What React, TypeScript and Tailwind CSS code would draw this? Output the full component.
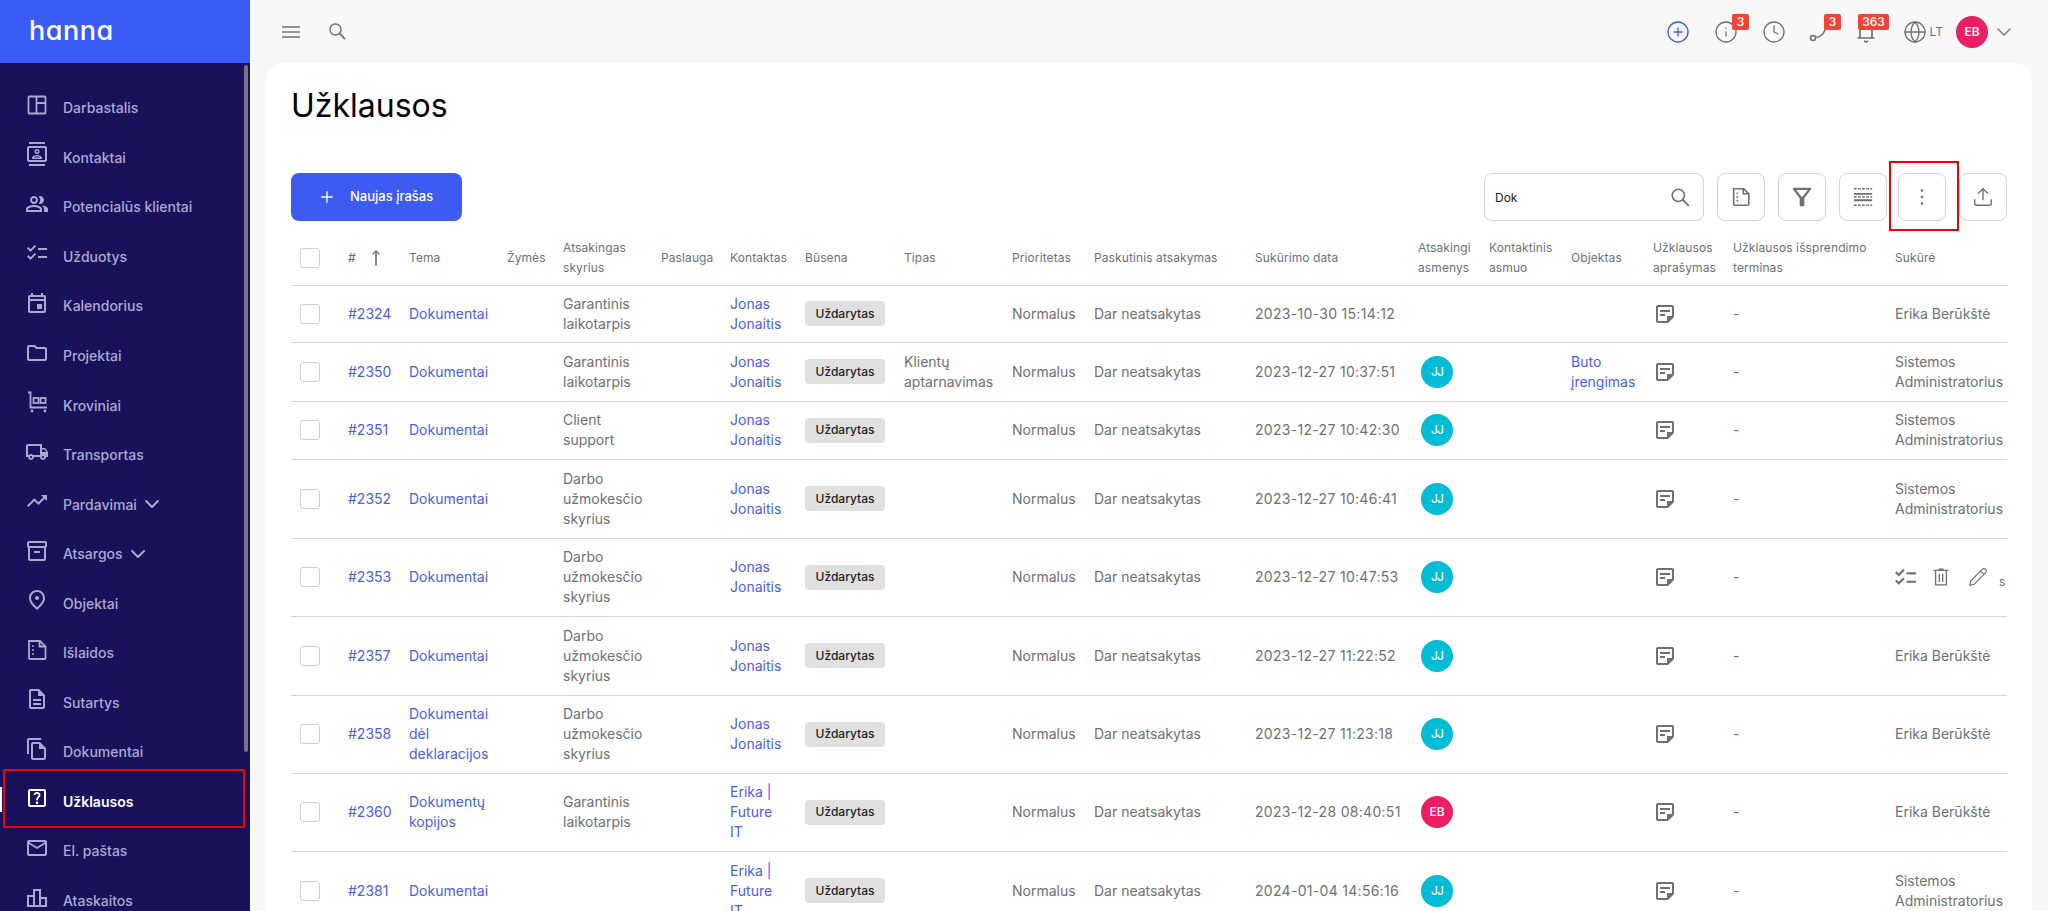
import React from 'react';
import { ChevronDown, CirclePlus, Clock, Globe, Info, Pencil, Plus, Upload } from 'lucide-react';
import {
    MdOutlineChecklist,
    MdOutlineContacts,
    MdOutlineDescription,
    MdOutlineEvent,
    MdOutlineFileCopy,
    MdOutlineFilterAlt,
    MdOutlineFolder,
    MdOutlineHelpCenter,
    MdOutlineInventory2,
    MdOutlineLeaderboard,
    MdOutlineLocalShipping,
    MdOutlineMail,
    MdOutlinePeopleAlt,
    MdOutlinePlace,
    MdOutlineStickyNote2,
    MdOutlineTrendingUp,
} from 'react-icons/md';

const DashboardIcon = ({ className }: { className?: string }) => (
    <svg viewBox="0 0 24 24" fill="none" stroke="currentColor" strokeWidth="1.8" className={className}>
        <rect x="3.5" y="3.5" width="17" height="17" rx="1" />
        <path d="M11.5 3.5v17M11.5 10h9" />
    </svg>
);

const TrolleyIcon = ({ className }: { className?: string }) => (
    <svg viewBox="0 0 24 24" fill="none" stroke="currentColor" strokeWidth="1.8" className={className}>
        <path d="M3 2.5h2.5v15H22" />
        <rect x="8.5" y="8" width="5" height="5" />
        <rect x="15.5" y="8" width="5" height="5" />
        <circle cx="7" cy="21" r="1.4" fill="currentColor" stroke="none" />
        <circle cx="20" cy="21" r="1.4" fill="currentColor" stroke="none" />
    </svg>
);

const DocDotsIcon = ({ className }: { className?: string }) => (
    <svg viewBox="0 0 24 24" fill="none" stroke="currentColor" strokeWidth="1.8" className={className}>
        <path d="M4 3h11l5.500 5.500V20a1 1 0 0 1-1 1H5a1 1 0 0 1-1-1Z" />
        <path d="M14.500 3v5.500H20.500" />
        <path d="M8 8v.01M8 12v.01M8 16v.01" strokeWidth="2" strokeLinecap="round" />
    </svg>
);

const DenseIcon = ({ className }: { className?: string }) => (
    <svg viewBox="0 0 24 24" fill="none" stroke="currentColor" className={className}>
        <path d="M2 3h20M2 21h20" strokeWidth="1.500" strokeDasharray="3 1.500" />
        <path d="M2 8.500h20M2 15.500h20" strokeWidth="2" />
        <path d="M2 12h20" strokeWidth="1.500" strokeDasharray="3 1.500" />
    </svg>
);

const PhoneCurve = ({ className }: { className?: string }) => (
    <svg viewBox="0 0 24 24" fill="none" stroke="currentColor" strokeWidth="1.600" className={className}>
        <circle cx="5" cy="18" r="2.500" />
        <path d="M7.500 17.500C13 17 17 13 18 6" />
    </svg>
);

const BellBase = ({ className }: { className?: string }) => (
    <svg viewBox="0 0 24 24" fill="none" stroke="currentColor" strokeWidth="1.700" className={className}>
        <path d="M6 4v14M18 4v14M3.500 18h17" />
        <path d="M10.500 20.500a1.500 1.500 0 0 0 3 0" />
    </svg>
);

const TrashIcon = ({ className }: { className?: string }) => (
    <svg viewBox="0 0 24 24" fill="none" stroke="currentColor" strokeWidth="1.600" className={className}>
        <path d="M3 4h18M9 2.500h6M5.500 4v17.500h13V4M10 8v10M14 8v10" />
    </svg>
);

const SearchGlass = ({ className }: { className?: string }) => (
    <svg viewBox="0 0 24 24" fill="none" stroke="currentColor" strokeWidth="1.800" className={className}>
        <circle cx="9.500" cy="9.500" r="7" />
        <path d="M14.500 14.500l7 7" strokeWidth="2.200" />
    </svg>
);

const SortArrow = ({ className }: { className?: string }) => (
    <svg viewBox="0 0 8 16" fill="none" stroke="currentColor" className={className}>
        <path d="M4 15.500V1.500" strokeWidth="1.800" />
        <path d="M0.500 4.500L4 0.800 7.500 4.500" strokeWidth="1.200" />
    </svg>
);

const navItems = [
    { label: 'Darbastalis', Icon: DashboardIcon },
    { label: 'Kontaktai', Icon: MdOutlineContacts },
    { label: 'Potencialūs klientai', Icon: MdOutlinePeopleAlt },
    { label: 'Užduotys', Icon: MdOutlineChecklist },
    { label: 'Kalendorius', Icon: MdOutlineEvent },
    { label: 'Projektai', Icon: MdOutlineFolder },
    { label: 'Kroviniai', Icon: TrolleyIcon },
    { label: 'Transportas', Icon: MdOutlineLocalShipping },
    { label: 'Pardavimai', Icon: MdOutlineTrendingUp, chevron: true },
    { label: 'Atsargos', Icon: MdOutlineInventory2, chevron: true },
    { label: 'Objektai', Icon: MdOutlinePlace },
    { label: 'Išlaidos', Icon: DocDotsIcon },
    { label: 'Sutartys', Icon: MdOutlineDescription },
    { label: 'Dokumentai', Icon: MdOutlineFileCopy },
    { label: 'Užklausos', Icon: MdOutlineHelpCenter, active: true },
    { label: 'El. paštas', Icon: MdOutlineMail },
    { label: 'Ataskaitos', Icon: MdOutlineLeaderboard },
];

const colWidths = [48, 61, 98, 56, 98, 69, 75, 99, 108, 82, 161, 163, 71, 82, 82, 80, 162, 121];

const headers = [
    'Tema', 'Žymės', 'Atsakingas skyrius', 'Paslauga', 'Kontaktas', 'Būsena', 'Tipas', 'Prioritetas',
    'Paskutinis atsakymas', 'Sukūrimo data', 'Atsakingi asmenys', 'Kontaktinis asmuo', 'Objektas',
    'Užklausos aprašymas', 'Užklausos išsprendimo terminas',
];

const SA = 'Sistemos Administratorius';
const EB = 'Erika Berūkštė';
const JJ = 'Jonas Jonaitis';
const FIT = 'Erika | Future IT';
const GL = 'Garantinis laikotarpis';
const DU = 'Darbo užmokesčio skyrius';

const rows = [
    { id: '#2324', h: 'h-[57px]', tema: 'Dokumentai', dept: GL, contact: JJ, type: '', date: '2023-10-30 15:14:12', who: '', obj: '', by: EB },
    { id: '#2350', h: 'h-[59px]', tema: 'Dokumentai', dept: GL, contact: JJ, type: 'Klientų aptarnavimas', date: '2023-12-27 10:37:51', who: 'JJ', obj: 'Buto įrengimas', by: SA },
    { id: '#2351', h: 'h-[58px]', tema: 'Dokumentai', dept: 'Client support', contact: JJ, type: '', date: '2023-12-27 10:42:30', who: 'JJ', obj: '', by: SA },
    { id: '#2352', h: 'h-[79px]', tema: 'Dokumentai', dept: DU, contact: JJ, type: '', date: '2023-12-27 10:46:41', who: 'JJ', obj: '', by: SA },
    { id: '#2353', h: 'h-[78px]', tema: 'Dokumentai', dept: DU, contact: JJ, type: '', date: '2023-12-27 10:47:53', who: 'JJ', obj: '', by: '' },
    { id: '#2357', h: 'h-[79px]', tema: 'Dokumentai', dept: DU, contact: JJ, type: '', date: '2023-12-27 11:22:52', who: 'JJ', obj: '', by: EB },
    { id: '#2358', h: 'h-[78px]', tema: 'Dokumentai dėl deklaracijos', dept: DU, contact: JJ, type: '', date: '2023-12-27 11:23:18', who: 'JJ', obj: '', by: EB },
    { id: '#2360', h: 'h-[78px]', tema: 'Dokumentų kopijos', dept: GL, contact: FIT, type: '', date: '2023-12-28 08:40:51', who: 'EB', obj: '', by: EB },
    { id: '#2381', h: 'h-[79px]', tema: 'Dokumentai', dept: '', contact: FIT, type: '', date: '2024-01-04 14:56:16', who: 'JJ', obj: '', by: SA },
];

const Avatar = ({ text }: { text: string }) => (
    <div className={`w-8 h-8 rounded-full flex items-center justify-center text-white text-[12px] font-medium ${text === 'EB' ? 'bg-[#e91e63]' : 'bg-[#00bcd4] tracking-[-1px]'}`}>
        {text}
    </div>
);

const Counter = ({ text, className }: { text: string; className: string }) => (
    <span className={`absolute top-[14px] h-4 rounded-[2px] bg-[#f44336] text-white text-[12px] leading-4 font-medium text-center ${className}`}>
        {text}
    </span>
);

const ToolButton = ({ children, className = '' }: { children: React.ReactNode; className?: string }) => (
    <button className={`w-12 h-12 rounded-lg border border-[#d4d4d4] bg-white flex items-center justify-center text-[#6e7076] ${className}`}>
        {children}
    </button>
);

const App: React.FC = () => {
    return (
        <div className="relative h-[911px] w-[2048px] overflow-hidden flex bg-[#f8f8f8] font-['Inter',sans-serif]">
            {/* Sidebar */}
            <aside className="w-[250px] shrink-0 flex flex-col bg-[#19125b]">
                <div className="h-[63px] shrink-0 bg-[#3b5bf5] flex items-center pl-[29px] text-white text-[27px] font-medium tracking-[0.5px] [font-feature-settings:'cv11']">
                    hanna
                </div>
                <nav className="pt-5 flex flex-col">
                    {navItems.map(({ label, Icon, chevron, active }) => (
                        <div
                            key={label}
                            className={`h-[49.56px] shrink-0 flex items-center pl-[25px] text-[14px] ${active ? 'text-white font-semibold' : 'text-[#aba9d2] font-medium'}`}
                        >
                            <Icon className="w-6 h-6 mb-[6px] shrink-0" />
                            <span className="ml-[14px]">{label}</span>
                            {chevron && <ChevronDown className="w-6 h-6 ml-[3px]" strokeWidth={2} />}
                        </div>
                    ))}
                </nav>
            </aside>

            {/* Main column */}
            <div className="flex-1 min-w-0 flex flex-col">
                <header className="h-[63px] shrink-0 flex items-center pl-[32px] pr-[32px] text-[#6e7076]">
                    <svg viewBox="0 0 18 12" fill="none" stroke="currentColor" strokeWidth="1.500" className="w-[18px] h-3">
                        <path d="M0 1h18M0 6h18M0 11h18" />
                    </svg>
                    <SearchGlass className="w-[19px] h-[19px] ml-[28px] mb-[1px]" />
                    <div className="ml-auto flex items-center">
                        <CirclePlus className="w-6 h-6 text-[#3b5bf5]" strokeWidth={1.3} />
                        <Info className="w-6 h-6 ml-6" strokeWidth={1.3} />
                        <Clock className="w-6 h-6 ml-6" strokeWidth={1.3} />
                        <PhoneCurve className="w-6 h-6 ml-[22px]" />
                        <BellBase className="w-6 h-6 ml-[22px]" />
                        <Globe className="w-6 h-6 ml-[25px]" strokeWidth={1.3} />
                        <span className="ml-[3px] text-[12px]">LT</span>
                        <div className="ml-[13px] w-8 h-8 rounded-full bg-[#e91e63] flex items-center justify-center text-white text-[12px] font-semibold">EB</div>
                        <ChevronDown className="w-6 h-6 ml-1" strokeWidth={1.3} />
                    </div>
                </header>
                <Counter text="3" className="left-[1732px] w-[17px]" />
                <Counter text="3" className="left-[1824px] w-[17px]" />
                <Counter text="363" className="left-[1858px] w-[31px]" />

                {/* Content card */}
                <main className="flex-1 min-h-0 mx-4 bg-white rounded-t-[18px] overflow-hidden pl-[25px] pr-[25px] pt-[23px] flex flex-col">
                    <h1 className="text-[32px] leading-10 text-black">Užklausos</h1>

                    <div className="mt-[47px] flex items-center shrink-0">
                        <button className="w-[171px] h-12 rounded-lg bg-[#3d5af1] flex items-center pl-[27px] text-white text-[13px] font-medium">
                            <Plus className="w-[18px] h-[18px] mr-[14px]" strokeWidth={1.8} />
                            Naujas įrašas
                        </button>
                        <div className="ml-auto flex items-center gap-[13px]">
                            <div className="w-[220px] h-12 rounded-lg border border-[#d4d4d4] flex items-center pl-[10px] pr-[12px] text-[12px] text-[#222]">
                                <span className="mt-[1px]">Dok</span>
                                <SearchGlass className="w-[21px] h-[21px] ml-auto text-[#6e7076]" />
                            </div>
                            <ToolButton><DocDotsIcon className="w-[22px] h-[22px]" /></ToolButton>
                            <ToolButton><MdOutlineFilterAlt className="w-7 h-7" /></ToolButton>
                            <ToolButton><DenseIcon className="w-[22px] h-[22px]" /></ToolButton>
                            <ToolButton className="ml-[-2px]">
                                <svg viewBox="0 0 24 24" fill="currentColor" className="w-6 h-6"><circle cx="12" cy="5.500" r="1.300" /><circle cx="12" cy="12" r="1.300" /><circle cx="12" cy="18.500" r="1.300" /></svg>
                            </ToolButton>
                            <ToolButton><Upload className="w-[22px] h-[22px]" strokeWidth={1.5} /></ToolButton>
                        </div>
                    </div>

                    <table className="mt-[11px] table-fixed w-[1716px] text-[14px] leading-5 text-[#6e7076]">
                        <colgroup>
                            {colWidths.map((w, i) => (
                                <col key={i} style={{ width: w }} />
                            ))}
                        </colgroup>
                        <thead>
                            <tr className="h-[53px] text-[12px] tracking-[0.1px] text-left border-b border-[#d4d4d4]">
                                <th className="pl-[9px] font-normal">
                                    <div className="w-5 h-5 rounded-[3px] border border-[#cfcfcf]" />
                                </th>
                                <th className="pl-[9px] font-normal">
                                    <div className="flex items-center">
                                        <span className="font-medium">#</span>
                                        <SortArrow className="w-2 h-4 ml-[16px] text-[#7a7a7a]" />
                                    </div>
                                </th>
                                {headers.map((h) => (
                                    <th key={h} className="pl-[9px] pr-[4px] font-normal">{h}</th>
                                ))}
                                <th className="pl-[9px] font-normal">Sukūrė</th>
                            </tr>
                        </thead>
                        <tbody>
                            {rows.map((r) => (
                                <tr key={r.id} className={`${r.h} border-b border-[#d4d4d4]`}>
                                    <td className="pl-[9px]">
                                        <div className="w-5 h-5 rounded-[3px] border border-[#cfcfcf]" />
                                    </td>
                                    <td className="pl-[9px] text-[#4a5cf5]">{r.id}</td>
                                    <td className="pl-[9px] pr-[9px] text-[#4a5cf5]">{r.tema}</td>
                                    <td />
                                    <td className="pl-[9px] pr-[9px]">{r.dept}</td>
                                    <td />
                                    <td className="pl-[9px] pr-[9px] text-[#4a5cf5]">{r.contact}</td>
                                    <td className="pl-[9px]">
                                        <span className="inline-flex h-[25px] w-[80px] items-center justify-center rounded bg-[#e0e0e0] text-[12px] font-medium text-[#222]">Uždarytas</span>
                                    </td>
                                    <td className="pl-[9px] pr-[9px]">{r.type}</td>
                                    <td className="pl-[9px]">Normalus</td>
                                    <td className="pl-[9px]">Dar neatsakytas</td>
                                    <td className="pl-[9px] tracking-[0.3px]">{r.date}</td>
                                    <td className="pl-[12px]">{r.who && <Avatar text={r.who} />}</td>
                                    <td />
                                    <td className="pl-[9px] pr-[9px] text-[#4a5cf5]">{r.obj}</td>
                                    <td className="pl-[9px]"><MdOutlineStickyNote2 className="w-6 h-6" /></td>
                                    <td className="pl-[9px]">-</td>
                                    <td className="pl-[9px]">
                                        {r.by || (
                                            <div className="flex items-center">
                                                <MdOutlineChecklist className="w-[25px] h-[25px] ml-[-2px]" />
                                                <TrashIcon className="w-5 h-5 ml-[13px]" />
                                                <Pencil className="w-5 h-5 ml-[17px]" strokeWidth={1.4} />
                                                <span className="ml-[11px] mt-[10px] text-[12px]">s</span>
                                            </div>
                                        )}
                                    </td>
                                </tr>
                            ))}
                        </tbody>
                    </table>
                </main>
            </div>

            {/* Sidebar scrollbar thumb and active marker */}
            <div className="absolute left-[244px] top-[65px] w-1 h-[687px] rounded-full bg-[#76757f]" />
            <div className="absolute left-0 top-[787px] w-[2px] h-[25px] bg-white" />

            {/* Red annotation frames */}
            <div className="absolute left-[3px] top-[769px] w-[242px] h-[59px] border-2 border-[#f00000]" />
            <div className="absolute left-[1889px] top-[161px] w-[70px] h-[70px] border-2 border-[#f00000]" />
        </div>
    );
};

export default App;
